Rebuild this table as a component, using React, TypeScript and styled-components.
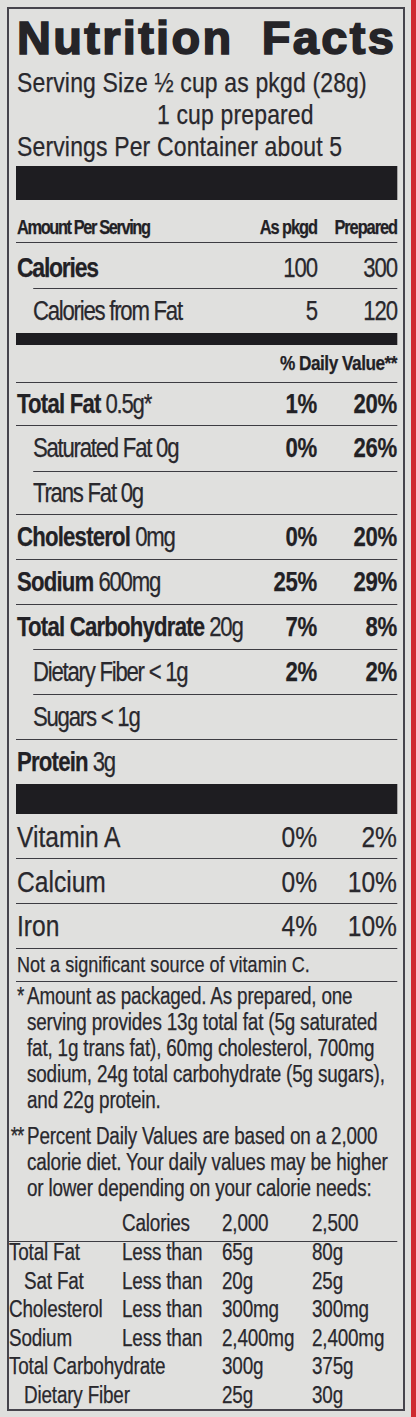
import React from 'react';
import styled, { createGlobalStyle } from 'styled-components';

// No condensed face is installed, so the label body is drawn in Liberation Sans
// and squeezed horizontally. Horizontal sizes inside are given in unsqueezed px.
const S = 0.82;
const u = (n: number) => +(n / S).toFixed(2);

const sans = `"Liberation Sans", Arial, sans-serif`;
const ink = '#29282d';
const dark = '#222125';
const rule = '#3d3c42';

const GlobalStyle = createGlobalStyle`
  html, body {
    margin: 0;
    padding: 0;
  }
  body {
    width: 416px;
    min-height: 1417px;
    background: linear-gradient(to right, #dfdfdd 411px, #cf2a30 411px);
    font-family: ${sans};
    color: ${ink};
  }
`;

const Label = styled.div`
  box-sizing: border-box;
  width: 398px;
  height: 1404px;
  margin: 7px 0 0 7px;
  padding: 0 6px 0 7px;
  border: 2px solid #46444c;
  background: #e0e0de;
  overflow: hidden;
`;

const Title = styled.h1`
  margin: 6px 0 0 1px;
  font-weight: 700;
  font-size: 47px;
  line-height: 46px;
  letter-spacing: 2.3px;
  word-spacing: 13px;
  color: #252428;
  -webkit-text-stroke: 1.6px #252428;
  white-space: nowrap;
`;

const Condensed = styled.div`
  width: ${u(381)}px;
  transform: scaleX(${S});
  transform-origin: 0 0;
  -webkit-text-stroke: 0.25px ${ink};
`;

const Serving = styled.div`
  margin-top: 6px;
  font-size: 28px;
  line-height: 32px;
  letter-spacing: 0.2px;
  white-space: nowrap;
`;

const ServingLine = styled.div<{ $pad?: number }>`
  padding-left: ${(p) => u(p.$pad ?? 1)}px;
`;

const Bar = styled.div<{ $h: number; $mt?: number }>`
  height: ${(p) => p.$h}px;
  margin-top: ${(p) => p.$mt ?? 0}px;
  background: #1e1d21;
`;

const Row = styled.div<{ $h: number; $pt?: number; $rule?: 'full' | 'inset' | 'none'; $sub?: boolean }>`
  display: flex;
  align-items: baseline;
  box-sizing: border-box;
  height: ${(p) => p.$h}px;
  padding-top: ${(p) => p.$pt ?? 0}px;
  line-height: ${(p) => p.$h - (p.$rule === 'none' ? 0 : 1) - (p.$pt ?? 0)}px;
  border-top: ${(p) => (p.$rule === 'none' ? '0' : `1px solid ${rule}`)};
  margin-left: ${(p) => (p.$rule === 'inset' ? u(17) : 0)}px;
  padding-left: ${(p) => u((p.$sub ? 17 : 1) - (p.$rule === 'inset' ? 17 : 0))}px;
  white-space: nowrap;
`;

const Name = styled.span<{ $size?: number; $ls?: number }>`
  flex: 1;
  font-size: ${(p) => p.$size ?? 27}px;
  letter-spacing: ${(p) => p.$ls ?? -1.5}px;
`;

const Bold = styled.b<{ $size?: number; $ls?: number }>`
  font-weight: 700;
  font-size: ${(p) => p.$size ?? 27}px;
  letter-spacing: ${(p) => p.$ls ?? -0.95}px;
  color: ${dark};
`;

const Value = styled.span<{ $w: number; $bold?: boolean; $size?: number; $ls?: number }>`
  width: ${(p) => u(p.$w)}px;
  text-align: right;
  font-size: ${(p) => p.$size ?? 27}px;
  font-weight: ${(p) => (p.$bold ? 700 : 400)};
  letter-spacing: ${(p) => p.$ls ?? -0.3}px;
  color: ${(p) => (p.$bold ? dark : ink)};
`;

const Small = styled.span<{ $w?: number; $size?: number; $ls?: number }>`
  ${(p) => (p.$w ? `width: ${u(p.$w)}px; text-align: right;` : 'flex: 1;')}
  font-size: ${(p) => p.$size ?? 20}px;
  line-height: 20px;
  font-weight: 700;
  letter-spacing: ${(p) => p.$ls ?? -1.7}px;
  color: ${dark};
`;

const Footer = styled.div`
  border-top: 1px solid ${rule};
  padding-top: 1px;
`;

const Note = styled.p<{ $mt?: number }>`
  margin: ${(p) => p.$mt ?? 0}px 0 0;
  padding-left: ${u(11)}px;
  font-size: 23px;
  line-height: 26px;
  letter-spacing: -0.2px;
  white-space: nowrap;
`;

const Line = styled.span`
  display: block;
`;

const Mark = styled.span`
  display: inline-block;
  box-sizing: border-box;
  width: ${u(18)}px;
  margin-left: ${u(-18)}px;
  padding-right: ${u(4)}px;
  text-align: right;
  letter-spacing: -1.5px;
`;

const Table = styled.div`
  margin: 8px 0 0 ${u(-8)}px;
  font-size: 23px;
  letter-spacing: -0.2px;
`;

const TableGrid = styled.div<{ $head?: boolean }>`
  display: grid;
  grid-template-columns: ${u(113)}px ${u(100)}px ${u(90)}px 1fr;
  padding-left: ${u(1)}px;
  line-height: ${(p) => (p.$head ? '28px' : '28.6px')};
  ${(p) => (p.$head ? `padding-bottom: 4px; border-bottom: 1px solid ${rule};` : 'margin-top: -4px;')}
  white-space: nowrap;
`;

const Cell = styled.span<{ $indent?: boolean }>`
  padding-left: ${(p) => (p.$indent ? u(15) : 0)}px;
`;

type Nutrient = {
  name: string;
  amount: string;
  a?: string;
  b?: string;
  sub?: boolean;
  rule: 'full' | 'inset';
  h: number;
};

const nutrients: Nutrient[] = [
  { name: 'Total Fat', amount: '0.5g*', a: '1%', b: '20%', rule: 'full', h: 43 },
  { name: 'Saturated Fat', amount: '0g', a: '0%', b: '26%', sub: true, rule: 'full', h: 46 },
  { name: 'Trans Fat', amount: '0g', sub: true, rule: 'inset', h: 43 },
  { name: 'Cholesterol', amount: '0mg', a: '0%', b: '20%', rule: 'full', h: 45 },
  { name: 'Sodium', amount: '600mg', a: '25%', b: '29%', rule: 'full', h: 45 },
  { name: 'Total Carbohydrate', amount: '20g', a: '7%', b: '8%', rule: 'full', h: 45 },
  { name: 'Dietary Fiber', amount: '< 1g', a: '2%', b: '2%', sub: true, rule: 'inset', h: 45 },
  { name: 'Sugars', amount: '< 1g', sub: true, rule: 'inset', h: 45 },
  { name: 'Protein', amount: '3g', rule: 'full', h: 45 },
];

const vitamins = [
  { name: 'Vitamin A', a: '0%', b: '2%' },
  { name: 'Calcium', a: '0%', b: '10%' },
  { name: 'Iron', a: '4%', b: '10%' },
];

const limits = [
  ['Total Fat', 'Less than', '65g', '80g'],
  ['Sat Fat', 'Less than', '20g', '25g'],
  ['Cholesterol', 'Less than', '300mg', '300mg'],
  ['Sodium', 'Less than', '2,400mg', '2,400mg'],
  ['Total Carbohydrate', '', '300g', '375g'],
  ['Dietary Fiber', '', '25g', '30g'],
];

export default function App() {
  return (
    <>
      <GlobalStyle />
      <Label>
        <Title>Nutrition Facts</Title>
        <Condensed>
          <Serving>
            <ServingLine>Serving Size ½ cup as pkgd (28g)</ServingLine>
            <ServingLine $pad={141}>1 cup prepared</ServingLine>
            <ServingLine>Servings Per Container about 5</ServingLine>
          </Serving>
          <Bar $h={34} $mt={3} />

          <Row $h={42} $pt={17} $rule="none">
            <Small>Amount Per Serving</Small>
            <Small $w={70} $ls={-1.3}>As pkgd</Small>
            <Small $w={80} $ls={-1.3}>Prepared</Small>
          </Row>
          <Row $h={46} $pt={4} $rule="full">
            <Name>
              <Bold $size={28} $ls={-1.5}>Calories</Bold>
            </Name>
            <Value $w={70} $ls={-1.3}>100</Value>
            <Value $w={80} $ls={-1.3}>300</Value>
          </Row>
          <Row $h={45} $rule="inset" $sub>
            <Name>Calories from Fat</Name>
            <Value $w={70} $ls={-1.3}>5</Value>
            <Value $w={80} $ls={-1.3}>120</Value>
          </Row>
          <Bar $h={12} />

          <Row $h={37} $pt={8} $rule="none">
            <Small>&nbsp;</Small>
            <Small $w={150} $size={21} $ls={-0.6}>% Daily Value**</Small>
          </Row>
          {nutrients.map((n) => (
            <Row key={n.name} $h={n.h} $rule={n.rule} $sub={n.sub}>
              <Name>
                {n.sub ? `${n.name} ${n.amount}` : (
                  <>
                    <Bold>{n.name}</Bold> {n.amount}
                  </>
                )}
              </Name>
              <Value $w={70} $bold>{n.a}</Value>
              <Value $w={80} $bold>{n.b}</Value>
            </Row>
          ))}
          <Bar $h={30} />

          {vitamins.map((v, i) => (
            <Row key={v.name} $h={i === 0 ? 44 : 45} $pt={i === 2 ? 0 : 1} $rule={i === 0 ? 'none' : 'full'}>
              <Name $size={30} $ls={0}>{v.name}</Name>
              <Value $w={70} $size={30} $ls={0}>{v.a}</Value>
              <Value $w={80} $size={30} $ls={0}>{v.b}</Value>
            </Row>
          ))}
          <Row $h={33} $pt={0} $rule="full">
            <Name $size={22} $ls={0}>Not a significant source of vitamin C.</Name>
          </Row>

          <Footer>
            <Note>
              <Line>
                <Mark>*</Mark>Amount as packaged. As prepared, one
              </Line>
              <Line>serving provides 13g total fat (5g saturated</Line>
              <Line>fat, 1g trans fat), 60mg cholesterol, 700mg</Line>
              <Line>sodium, 24g total carbohydrate (5g sugars),</Line>
              <Line>and 22g protein.</Line>
            </Note>
            <Note $mt={10}>
              <Line>
                <Mark>**</Mark>Percent Daily Values are based on a 2,000
              </Line>
              <Line>calorie diet. Your daily values may be higher</Line>
              <Line>or lower depending on your calorie needs:</Line>
            </Note>
            <Table>
              <TableGrid $head>
                <Cell />
                <Cell>Calories</Cell>
                <Cell>2,000</Cell>
                <Cell>2,500</Cell>
              </TableGrid>
              <TableGrid>
                {limits.map((r) => (
                  <React.Fragment key={r[0]}>
                    <Cell $indent={r[0] === 'Sat Fat' || r[0] === 'Dietary Fiber'}>{r[0]}</Cell>
                    <Cell>{r[1]}</Cell>
                    <Cell>{r[2]}</Cell>
                    <Cell>{r[3]}</Cell>
                  </React.Fragment>
                ))}
              </TableGrid>
            </Table>
          </Footer>
        </Condensed>
      </Label>
    </>
  );
}
